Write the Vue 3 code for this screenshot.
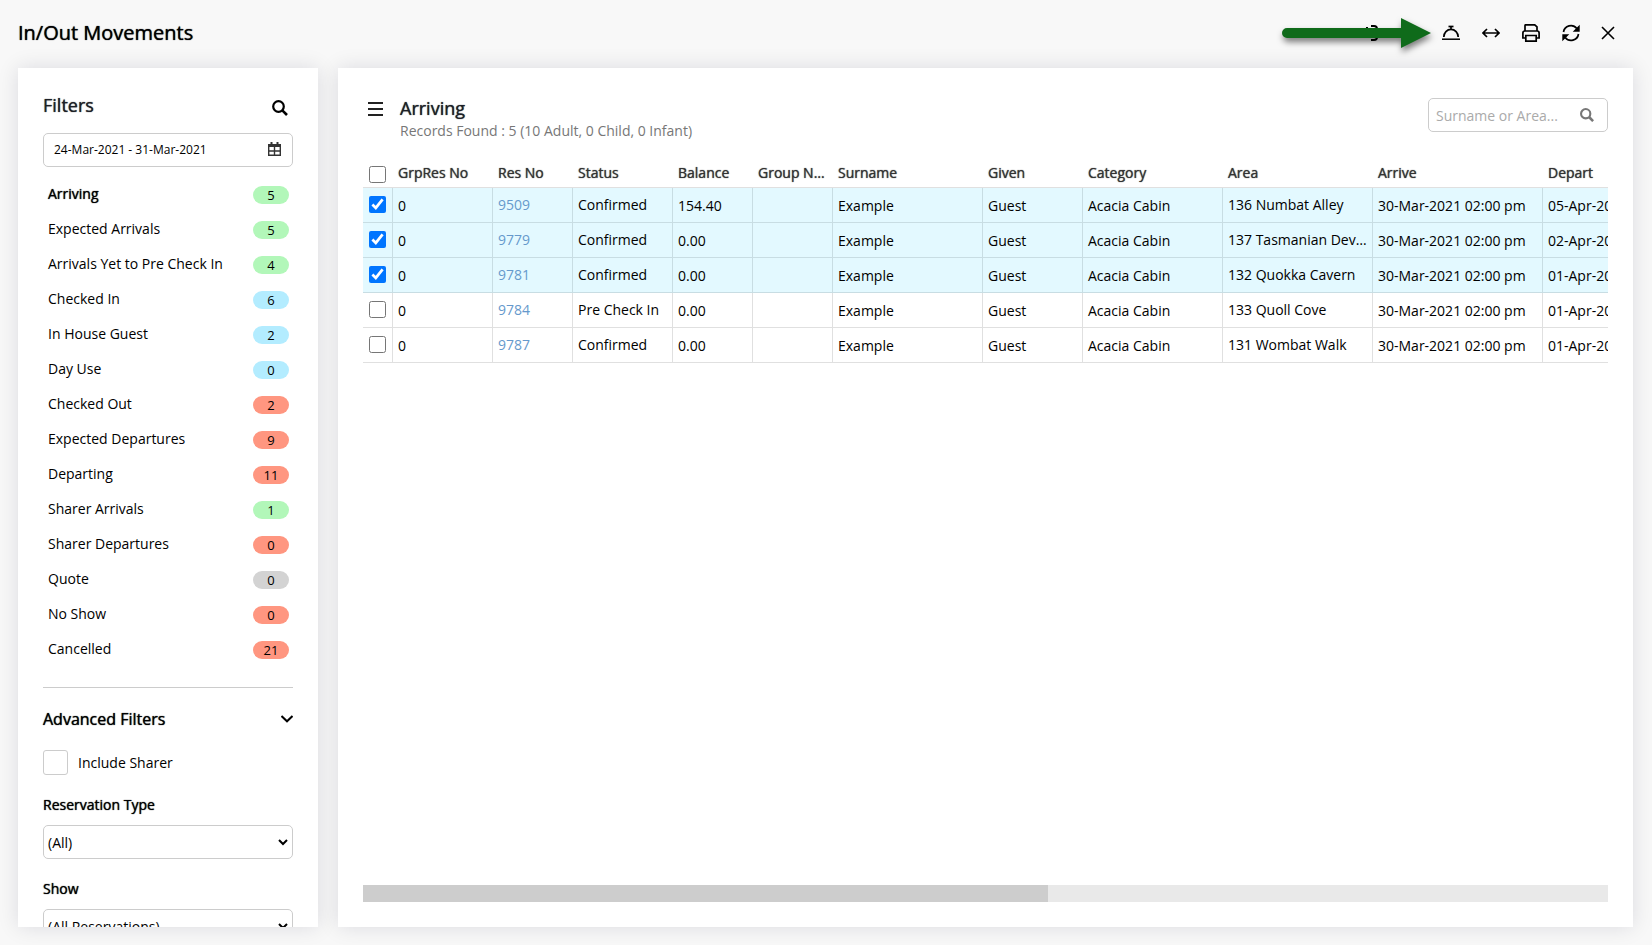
<script setup>
import { ref } from 'vue'

const filters = [
  { label: 'Arriving', count: 5, tone: 'green' },
  { label: 'Expected Arrivals', count: 5, tone: 'green' },
  { label: 'Arrivals Yet to Pre Check In', count: 4, tone: 'green' },
  { label: 'Checked In', count: 6, tone: 'blue' },
  { label: 'In House Guest', count: 2, tone: 'blue' },
  { label: 'Day Use', count: 0, tone: 'blue' },
  { label: 'Checked Out', count: 2, tone: 'red' },
  { label: 'Expected Departures', count: 9, tone: 'red' },
  { label: 'Departing', count: 11, tone: 'red' },
  { label: 'Sharer Arrivals', count: 1, tone: 'green' },
  { label: 'Sharer Departures', count: 0, tone: 'red' },
  { label: 'Quote', count: 0, tone: 'gray' },
  { label: 'No Show', count: 0, tone: 'red' },
  { label: 'Cancelled', count: 21, tone: 'red' },
]
const active = ref('Arriving')

const columns = [
  { title: 'GrpRes No', cls: 'w100' },
  { title: 'Res No', cls: 'w80' },
  { title: 'Status', cls: 'w100' },
  { title: 'Balance', cls: 'w80' },
  { title: 'Group Name', cls: 'w80' },
  { title: 'Surname', cls: 'w150' },
  { title: 'Given', cls: 'w100' },
  { title: 'Category', cls: 'w140' },
  { title: 'Area', cls: 'w150' },
  { title: 'Arrive', cls: 'w170' },
  { title: 'Depart', cls: 'w170' },
]

const rows = ref([
  { selected: true, res: 9509, status: 'Confirmed', balance: '154.40', area: '136 Numbat Alley', depart: '05-Apr-2021 10:00 am' },
  { selected: true, res: 9779, status: 'Confirmed', balance: '0.00', area: '137 Tasmanian Devil Den', depart: '02-Apr-2021 10:00 am' },
  { selected: true, res: 9781, status: 'Confirmed', balance: '0.00', area: '132 Quokka Cavern', depart: '01-Apr-2021 10:00 am' },
  { selected: false, res: 9784, status: 'Pre Check In', balance: '0.00', area: '133 Quoll Cove', depart: '01-Apr-2021 10:00 am' },
  { selected: false, res: 9787, status: 'Confirmed', balance: '0.00', area: '131 Wombat Walk', depart: '01-Apr-2021 10:00 am' },
])
</script>

<template>
  <div class="page">
    <header class="topbar">
      <h1>In/Out Movements</h1>
      <div class="tools">
        <button type="button" class="tool" aria-label="Transfer">
          <svg width="18" height="18" viewBox="0 0 18 18" fill="none" stroke="#000" stroke-width="2"><path d="M9 2h3q3 0 3 3v2M9 16h3q3 0 3-3v-2" /><path d="M3 9h9M5 3v2" /></svg>
        </button>
        <button type="button" class="tool" aria-label="Mark">
          <svg width="18" height="18" viewBox="0 0 18 18"><path d="M0 2v3M0 9h14" fill="none" stroke="#000" stroke-width="2" /></svg>
        </button>
        <button type="button" class="tool" aria-label="Pre check in">
          <svg width="18" height="18" viewBox="0 0 18 18" fill="none" stroke="#000"><path d="M0 15.2h18" stroke-width="1.5" /><path d="M1.800 13a7.200 7.600 0 0 1 14.400 0M9 2.500v3" stroke-width="1.700" /><path d="M6.500 2.500h5" stroke-width="1.700" /></svg>
        </button>
        <button type="button" class="tool" aria-label="Fit width">
          <svg width="18" height="18" viewBox="0 0 18 18" fill="none" stroke="#000" stroke-width="1.7"><path d="M1 9h16M5 5L1 9l4 4M13 5l4 4-4 4" /></svg>
        </button>
        <button type="button" class="tool" aria-label="Print">
          <svg width="18" height="18" viewBox="0 0 18 18" fill="none" stroke="#000" stroke-width="1.7"><path d="M3 7V1.500q0-.7.7-.7h9l2.300 2V7" /><path d="M3 14H.9V9q0-2 2-2h12.200q2 0 2 2v5H15" /><path d="M3.800 11.500h10.400v5.700H3.800z" /></svg>
        </button>
        <button type="button" class="tool" aria-label="Refresh">
          <svg width="18" height="18" viewBox="0 0 18 18"><path d="M1.500 8A7.500 7.500 0 0 1 14.800 4.500M16.500 10A7.500 7.500 0 0 1 3.200 13.500" fill="none" stroke="#000" stroke-width="1.700" /><path d="M17.700.8v7H10.700zM.3 17.200v-7H7.300z" /></svg>
        </button>
        <button type="button" class="tool close" aria-label="Close">
          <svg width="18" height="18" viewBox="0 0 18 18"><path d="M3 3l12 12M15 3L3 15" fill="none" stroke="#000" stroke-width="1.600" /></svg>
        </button>
        <svg class="pointer" width="160" height="46" viewBox="0 0 160 46" aria-hidden="true"><path d="M8 13h114V3l30 15-30 15V23H8a5 5 0 0 1 0-10z" fill="#0f6b1a" /></svg>
      </div>
    </header>

    <main class="body">
      <aside class="panel side">
        <div class="side-head">
          <h2>Filters</h2>
          <button type="button" class="plain" aria-label="Search">
            <svg width="16" height="16" viewBox="0 0 16 16" fill="none" stroke="#000"><circle cx="6.500" cy="6.500" r="5.300" stroke-width="2.200" /><path d="M10.300 10.300l4.700 4.700" stroke-width="2.600" /></svg>
          </button>
        </div>
        <div class="date">
          <input type="text" value="24-Mar-2021 - 31-Mar-2021" aria-label="Date range" />
          <svg width="13" height="14" viewBox="0 0 13 14" fill="none" stroke="#333"><path d="M.7 3.500h11.600v9.800H.7zM6.500 5v8M1 9h11" stroke-width="1.400" /><path d="M0 3.500h13" stroke-width="3" /><path d="M3.500 0v3M9.500 0v3" stroke-width="2" /></svg>
        </div>
        <ul class="filters">
          <li v-for="f in filters" :key="f.label">
            <button type="button" :class="['filter', { on: f.label === active }]" @click="active = f.label">
              <span>{{ f.label }}</span>
              <span :class="['pill', f.tone]">{{ f.count }}</span>
            </button>
          </li>
        </ul>
        <div class="adv">
          <button type="button" class="adv-head">
            <span>Advanced Filters</span>
            <svg width="12" height="8" viewBox="0 0 12 8"><path d="M0.500 1L6 6.300 11.500 1" fill="none" stroke="#000" stroke-width="2" /></svg>
          </button>
          <label class="sharer"><input type="checkbox" class="bigbox" /><span>Include Sharer</span></label>
          <label class="field" for="restype">Reservation Type</label>
          <div class="select">
            <select id="restype"><option>(All)</option></select>
            <svg width="10" height="7" viewBox="0 0 10 7"><path d="M1 1l4 4 4-4" fill="none" stroke="#000" stroke-width="2" /></svg>
          </div>
          <label class="field" for="show">Show</label>
          <div class="select">
            <select id="show"><option>(All Reservations)</option></select>
            <svg width="10" height="7" viewBox="0 0 10 7"><path d="M1 1l4 4 4-4" fill="none" stroke="#000" stroke-width="2" /></svg>
          </div>
        </div>
      </aside>

      <section class="panel content">
        <div class="content-head">
          <button type="button" class="plain menu" aria-label="Menu">
            <svg width="15" height="14" viewBox="0 0 15 14"><path d="M0 1h15M0 7h15M0 13h15" stroke="#222" stroke-width="2" /></svg>
          </button>
          <div class="heading">
            <h2>Arriving</h2>
            <p>Records Found : 5 (10 Adult, 0 Child, 0 Infant)</p>
          </div>
          <div class="search">
            <input type="text" placeholder="Surname or Area..." aria-label="Surname or Area" />
            <svg width="14" height="14" viewBox="0 0 16 16" fill="none" stroke="#777"><circle cx="6.500" cy="6.500" r="5.300" stroke-width="2.400" /><path d="M10.300 10.300l4.700 4.700" stroke-width="3" /></svg>
          </div>
        </div>
        <div class="grid">
          <table>
            <colgroup>
              <col class="w30" />
              <col v-for="c in columns" :key="c.title" :class="c.cls" />
            </colgroup>
            <thead>
              <tr>
                <th class="pick"><input type="checkbox" aria-label="Select all" /></th>
                <th v-for="c in columns" :key="c.title">{{ c.title }}</th>
              </tr>
            </thead>
            <tbody>
              <tr v-for="r in rows" :key="r.res" :class="{ selected: r.selected }">
                <td class="pick"><input v-model="r.selected" type="checkbox" :aria-label="'Select ' + r.res" /></td>
                <td>0</td>
                <td class="raised"><a href="#">{{ r.res }}</a></td>
                <td class="raised">{{ r.status }}</td>
                <td>{{ r.balance }}</td>
                <td></td>
                <td>Example</td>
                <td>Guest</td>
                <td>Acacia Cabin</td>
                <td class="raised">{{ r.area }}</td>
                <td>30-Mar-2021 02:00 pm</td>
                <td>{{ r.depart }}</td>
              </tr>
            </tbody>
          </table>
        </div>
        <div class="track"><div class="thumb"></div></div>
      </section>
    </main>
  </div>
</template>

<style>
body {
  background: #f8f8f8;
}
</style>

<style scoped>
.page {
  box-sizing: border-box;
  height: 100vh;
  display: flex;
  flex-direction: column;
  padding: 0 19px 18px 18px;
  font-family: "Open Sans", "Noto Sans", sans-serif;
  font-size: 14px;
  line-height: 20px;
  color: #000;
}
.page * {
  box-sizing: border-box;
}
button,
input,
select {
  font: inherit;
  color: inherit;
  margin: 0;
}
button {
  padding: 0;
  border: 0;
  background: none;
  cursor: pointer;
}
svg {
  display: block;
  flex: none;
}
h1,
h2,
p,
ul {
  margin: 0;
  padding: 0;
}
h1,
h2,
th,
.on,
.adv-head,
.field {
  font-weight: 400;
  text-shadow: 0 0 1px currentColor;
}
.topbar {
  flex: none;
  height: 68px;
  display: flex;
  align-items: center;
  justify-content: space-between;
  padding-bottom: 2px;
}
h1 {
  font-size: 20px;
  line-height: 28px;
}
.tools {
  position: relative;
  display: flex;
  gap: 22px;
  padding-right: 16px;
}
.tool.close {
  margin-left: -3px;
}
.pointer {
  position: absolute;
  left: -83px;
  top: -9px;
  filter: drop-shadow(1px 4px 3px rgba(0, 0, 0, 0.5));
}
.body {
  flex: 1;
  min-height: 0;
  display: flex;
  gap: 20px;
}
.panel {
  background: #fff;
  box-shadow: 0 0 20px rgba(0, 0, 50, 0.12);
  padding: 25px;
}
.side {
  flex: none;
  width: 300px;
  overflow: hidden;
}
.side-head {
  display: flex;
  justify-content: space-between;
  height: 40px;
  padding-right: 5px;
}
.side-head .plain {
  height: 30px;
}
h2 {
  font-size: 18px;
  line-height: 24px;
  color: #1c1f26;
}
.date,
.search,
.select {
  display: flex;
  align-items: center;
  height: 34px;
  border: 1px solid #ccc;
  border-radius: 5px;
}
.date {
  padding: 0 11px 0 10px;
}
.date svg {
  margin-bottom: 2px;
}
.date input {
  flex: 1;
  min-width: 0;
  border: 0;
  padding: 0;
  font-size: 12px;
  background: none;
}
.filters {
  list-style: none;
  padding-top: 9px;
}
.filter {
  display: flex;
  align-items: center;
  justify-content: space-between;
  width: 100%;
  height: 35px;
  padding: 0 4px 0 5px;
}
.pill {
  width: 36px;
  height: 18px;
  margin-top: 2px;
  border-radius: 9px;
  font-size: 13px;
  line-height: 19px;
  text-align: center;
  font-weight: 400;
  text-shadow: none;
}
.green { background: #b2f7b9; }
.blue { background: #b3ecff; }
.red { background: #ff9680; }
.gray { background: #d3d3d3; }
.adv {
  margin-top: 21px;
  border-top: 1px solid #ccc;
}
.adv-head {
  display: flex;
  align-items: center;
  justify-content: space-between;
  width: 100%;
  height: 62px;
  font-size: 16px;
}
.sharer {
  display: flex;
  align-items: center;
  gap: 10px;
}
.bigbox {
  appearance: none;
  width: 25px;
  height: 25px;
  border: 1px solid #ccc;
  border-radius: 3px;
}
.field {
  display: block;
  padding: 20px 0 10px;
}
.select {
  position: relative;
}
.select select {
  appearance: none;
  width: 100%;
  height: 32px;
  border: 0;
  padding: 2px 4px 0;
  background: none;
}
.select svg {
  position: absolute;
  right: 4px;
  pointer-events: none;
}
.content {
  flex: 1;
  min-width: 0;
  display: flex;
  flex-direction: column;
}
.content-head {
  display: flex;
  align-items: flex-start;
  height: 60px;
  padding-top: 5px;
}
.menu {
  padding: 4px 17px 0 5px;
}
.heading {
  flex: 1;
}
.heading p {
  padding-top: 3px;
  color: #777;
}
.heading h2 {
  line-height: 20px;
}
.search {
  width: 180px;
  padding: 0 13px 0 7px;
}
.search input {
  flex: 1;
  min-width: 0;
  border: 0;
  padding: 2px 0 0;
  background: none;
}
.search input::placeholder {
  color: #aaa;
}
.grid {
  flex: 1;
  min-height: 0;
  overflow: hidden;
}
table {
  table-layout: fixed;
  width: 1350px;
  border-collapse: separate;
  border-spacing: 0;
}
.w30 { width: 30px; }
.w80 { width: 80px; }
.w100 { width: 100px; }
.w140 { width: 140px; }
.w150 { width: 150px; }
.w170 { width: 170px; }
th,
td {
  height: 35px;
  padding: 2px 5px 0;
  text-align: left;
  white-space: nowrap;
  overflow: hidden;
  text-overflow: ellipsis;
  border-bottom: 1px solid #e0e0e0;
}
th {
  color: #333;
  padding: 6px 5px 0;
}
td {
  border-right: 1px solid #e0e0e0;
}
td.raised {
  padding: 0 5px;
}
.selected td {
  background: #e3f9ff;
  border-color: #c8dde3;
}
a {
  color: #6699cc;
  text-decoration: none;
}
td.pick {
  padding: 0 5px 1px 6px;
}
th.pick {
  padding: 8px 5px 0 6px;
}
.pick input {
  display: block;
  width: 17px;
  height: 17px;
  accent-color: #0075ff;
}
.track {
  flex: none;
  height: 17px;
  background: #e9e9e9;
}
.thumb {
  width: 55%;
  height: 17px;
  background: #cdcdcd;
}
</style>
